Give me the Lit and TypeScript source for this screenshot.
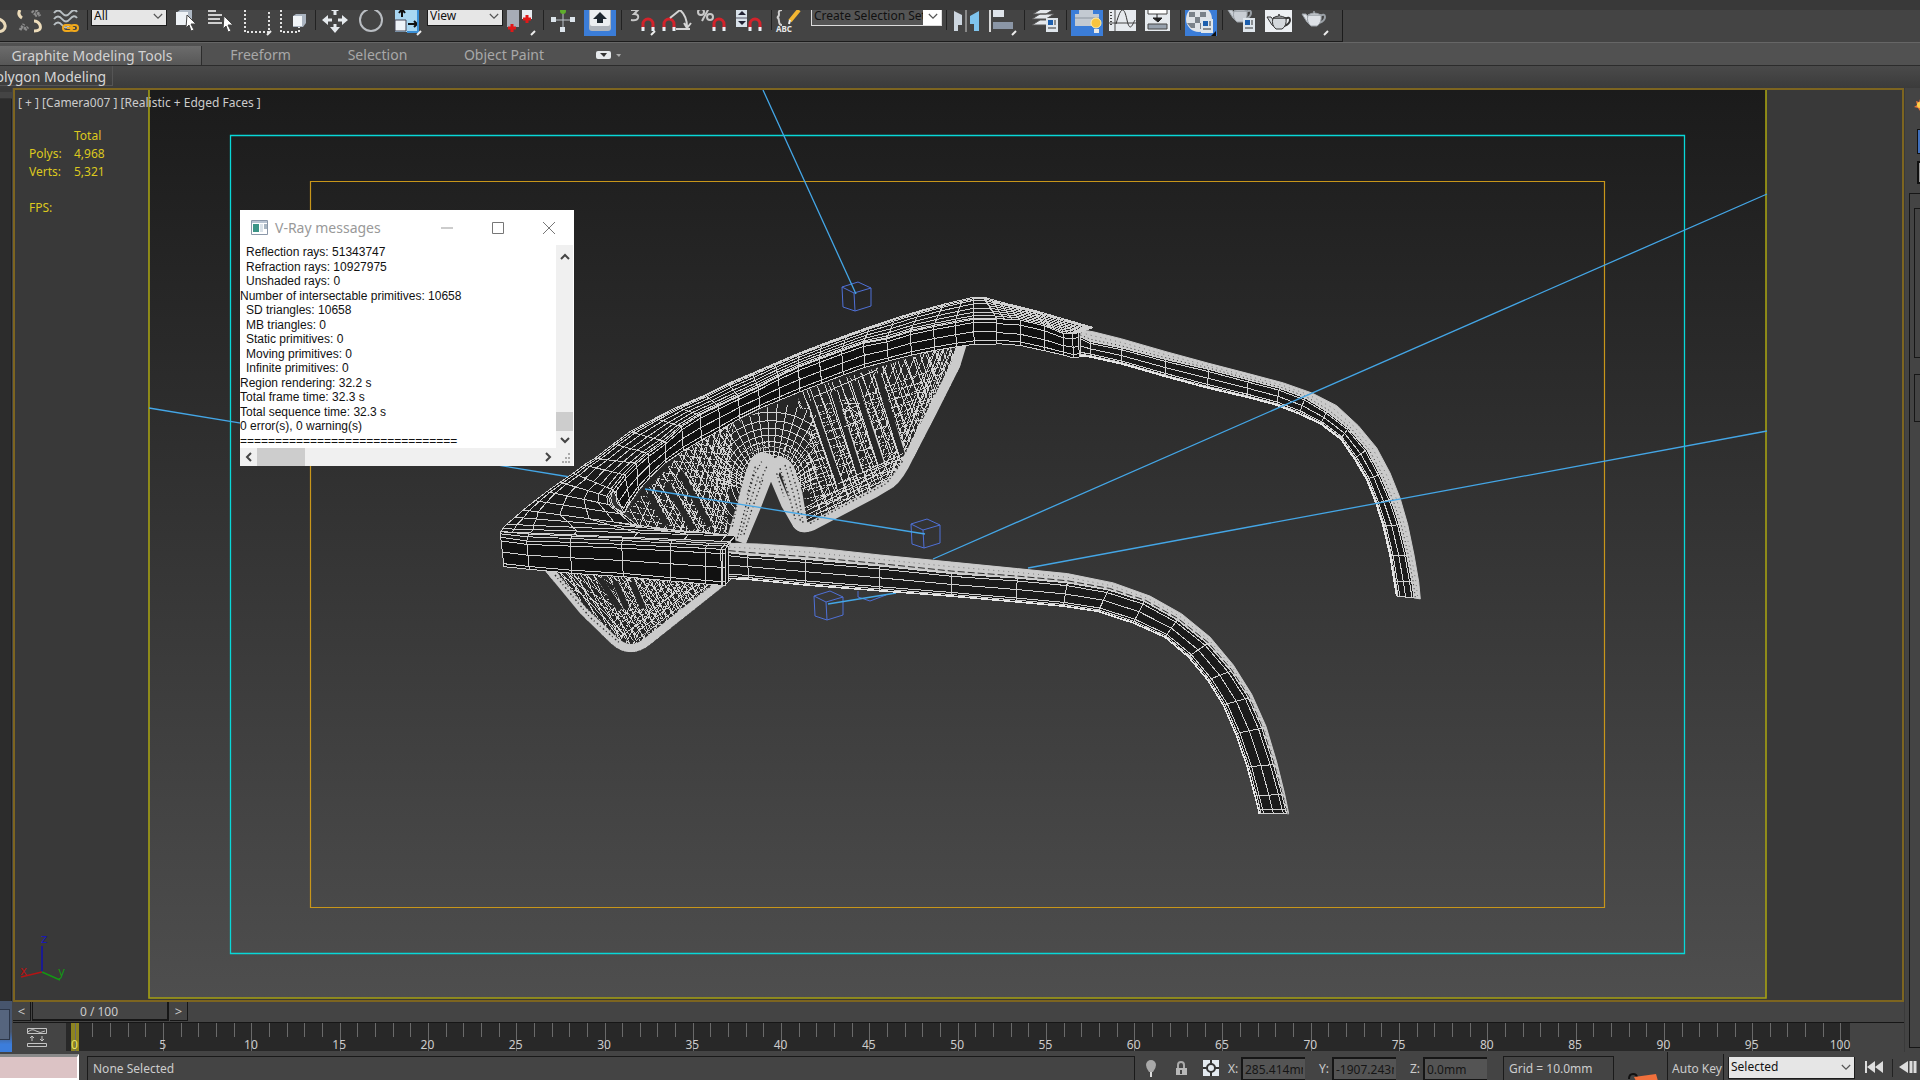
import { LitElement, html, css, svg } from "lit";
import { customElement } from "lit/decorators.js";

type Point = [number, number];

/* ---------- wireframe geometry ---------- */

const parse = (list: string): Point[] => {
  const n = list.trim().split(/\s+/).map(Number);
  const out: Point[] = [];
  for (let i = 0; i < n.length; i += 2) out.push([n[i], n[i + 1]]);
  return out;
};
const front = (list: string): Point[] => parse(list).map(([x, y]) => [480 + x / 3, 280 + y / 3]);
const rear = (list: string): Point[] => parse(list).map(([x, y]) => [940 + x / 3, 280 + y / 2.8]);
const mix = (a: Point, b: Point, t: number): Point => [a[0] + (b[0] - a[0]) * t, a[1] + (b[1] - a[1]) * t];
const toPath = (pts: Point[]) => "M" + pts.map((p) => `${p[0].toFixed(1)} ${p[1].toFixed(1)}`).join("L");

/* A surface stretched between two rails that have the same number of stations. */
const surface = (a: Point[], b: Point[], rows: number[], cls = "dark", subdivide = 1) => {
  const outline = toPath([...a, ...[...b].reverse()]) + "Z";
  let lines = "";
  for (const r of rows) lines += toPath(a.map((p, i) => mix(p, b[i], r)));
  for (let i = 0; i < a.length; i++) {
    lines += toPath([a[i], b[i]]);
    if (i + 1 < a.length) {
      for (let k = 1; k < subdivide; k++) {
        const t = k / subdivide;
        lines += toPath([mix(a[i], a[i + 1], t), mix(b[i], b[i + 1], t)]);
      }
    }
  }
  return svg`<path class="face ${cls}" d=${outline}></path><path class="edge" d=${lines}></path>`;
};

/* The bright, densely subdivided top of a temple. */
const brightBand = (a: Point[], b: Point[], dash: string) => svg`
  <path class="bright" d=${toPath([...a, ...[...b].reverse()]) + "Z"}></path>
  <path class="speck" stroke-dasharray=${dash} d=${toPath(a.map((p, i) => mix(p, b[i], 0.78)))}></path>
  <path class="speck thin" stroke-dasharray="1 4" d=${toPath(a.map((p, i) => mix(p, b[i], 0.4)))}></path>`;

const rimTop = front("400 630 435 585 470 550 505 520 555 485 605 440 660 405 716 378 775 350 835 322 895 290 955 262 1018 238 1085 213 1150 190 1220 177 1290 155 1360 140 1425 128 1480 118 1550 118");
const rimBottom = front("432 700 450 668 475 632 510 592 558 547 610 512 665 480 720 450 780 415 840 385 900 360 960 335 1025 310 1090 285 1155 262 1225 243 1295 225 1365 211 1430 200 1483 193 1550 192");
const rimOuter = front("280 580 312 555 345 535 400 492 450 455 525 415 590 382 675 345 745 310 816 280 885 250 955 220 1025 193 1100 165 1170 140 1245 115 1320 92 1390 73 1445 60 1480 52 1515 52");
const cornerTop = rear("170 108 240 112 313 128 370 150 398 150 415 148");
const cornerBottom = rear("170 178 240 183 313 198 370 210 400 218 418 216");
const cornerOuter = rear("130 48 200 66 280 84 350 103 420 122 460 133");

const blockTop = front("62 772 140 783 270 787 425 793 570 800 675 805 722 808 735 808");
const blockBottom = front("72 860 148 868 275 880 430 890 573 903 678 912 725 916 738 915");
const blockMid = front("62 755 146 762 275 768 428 774 575 782 690 790 735 792 750 785");
const crownLeft = front("62 755 68 746 80 733 105 712 130 690 165 662 200 635 240 607 280 580");
const crownRight = front("750 785 765 768 700 760 600 752 470 735 430 703 392 675 386 650 400 630");

const rearTop = rear("420 158 450 172 545 190 675 222 805 250 925 280 1018 303 1095 330 1160 368 1225 415 1280 475 1320 545 1352 615 1378 685 1400 770 1415 845 1422 890");
const rearBottom = rear("420 212 450 215 545 235 675 270 803 302 920 328 1010 350 1078 375 1142 403 1202 445 1243 500 1280 558 1308 625 1330 690 1350 770 1363 845 1370 885");
const rearOuter = rear("425 140 460 145 545 165 675 200 805 233 925 262 1030 288 1115 316 1190 352 1255 408 1310 470 1350 540 1380 610 1403 685 1422 770 1436 845 1441 893");

const frontTop = [...front("745 818 803 825 975 838 1198 858"), ...rear("35 822 232 835 382 848 505 868 613 900 712 952 802 1018 873 1095 925 1170 965 1255 1000 1357 1025 1440 1036 1482 1040 1494")];
const frontBottom = [...front("745 895 805 898 978 915 1198 932"), ...rear("35 885 228 901 370 913 475 928 580 960 675 1000 745 1055 803 1120 850 1190 887 1270 922 1363 945 1445 955 1482 958 1495")];
const frontOuter = [...front("750 790 835 792 1000 803 1200 825"), ...rear("35 790 232 808 382 822 520 848 630 885 725 935 810 1000 880 1078 935 1160 978 1250 1010 1350 1033 1435 1042 1475 1046 1495")];

/* Parallel lines through a region, drawn in lens units. */
const hatch = (x: number, y: number, dx: number, dy: number, stepX: number, stepY: number, n: number) => {
  let d = "";
  for (let i = 0; i < n; i++) d += `M${x + i * stepX} ${y + i * stepY}l${dx} ${dy}`;
  return d;
};

const fan = (cx: number, cy: number, from: number, to: number, step: number, r0: number, r1: number) => {
  let d = "";
  for (let a = from; a <= to; a += step) {
    const t = (a * Math.PI) / 180;
    const c = Math.cos(t);
    const s = Math.sin(t);
    d += `M${(cx + c * r0).toFixed(0)} ${(cy - s * r0).toFixed(0)}L${(cx + c * r1).toFixed(0)} ${(cy - s * r1).toFixed(0)}`;
  }
  return d;
};

const lenses = svg`
  <g transform="translate(480 280) scale(.33333)">
    <clipPath id="upper"><path d="M440 695L510 592 610 512 720 450 840 385 960 335 1090 285 1225 243 1365 211 1460 195 1440 260 1370 400 1300 535Q1270 600 1240 622L1190 652 1015 744Q965 772 940 740L905 680 873 605 840 690 797 792 735 770 600 755 470 735Z"></path></clipPath>
    <clipPath id="right"><path d="M960 335L1460 180 1440 260 1300 535 1240 622 965 760 975 640 930 500Z"></path></clipPath>
    <clipPath id="left"><path d="M440 695L610 512 780 415 800 520 770 620 735 770 470 735Z"></path></clipPath>
    <clipPath id="bridge"><path d="M720 450L960 335 1010 380 1010 620 975 640 873 600 797 790 735 770 700 600Z"></path></clipPath>
    <clipPath id="lower"><path d="M195 872L300 1000 395 1092Q450 1140 508 1095L735 915Z"></path></clipPath>
    <g clip-path="url(#upper)">
      <rect class="lens" x="430" y="190" width="1040" height="600"></rect>
      <g clip-path="url(#left)">
        <path class="wire" d=${hatch(380, 560, 120, 220, 22, -8, 20)}></path>
        <path class="wire" d=${hatch(430, 520, 190, 250, 30, -6, 12)}></path>
        <path class="wire soft" d=${hatch(470, 760, 130, -330, 26, 0, 16)}></path>
        <path class="wire soft" d=${hatch(600, 760, 60, -330, 17, 0, 12)}></path>
        <path class="wire dots" d=${hatch(440, 640, 330, 60, 0, 18, 9) + hatch(490, 610, 300, 40, 14, -18, 8)}></path>
        <path class="slot" d="M505 640L560 735M560 610L640 750M600 575L690 740"></path>
        <path class="wire" d="M520 640L575 735M575 610L655 750M615 575L705 740"></path>
      </g>
      <g clip-path="url(#right)">
        <path class="wire" d=${hatch(880, 290, 150, 430, 23, -4, 28)}></path>
        <path class="wire soft" d=${hatch(892, 290, 170, 430, 34, -6, 20)}></path>
        <path class="wire soft" d=${hatch(1010, 700, 200, -480, 28, -8, 17)}></path>
        <path class="wire dots" d=${hatch(960, 420, 500, -190, 3, 22, 18)}></path>
        <path class="wire dots" d=${hatch(960, 390, 500, -110, 0, 27, 12)}></path>
        <path class="wire" d=${hatch(960, 690, 320, -165, 2, 12, 7)}></path>
        <path class="wire" d=${hatch(1370, 200, -150, 390, 12, 0, 7)}></path>
        <path class="slot" d="M992 362L1078 612M1060 335L1140 585M1122 305L1204 552M1192 280L1268 530"></path>
        <path class="wire" d="M982 365L1068 612M1004 362L1088 606M1050 335L1130 585M1072 330L1150 580M1112 305L1194 555M1134 300L1215 548M1180 282L1258 530M1204 278L1280 515"></path>
        <path class="wire" d="M1000 352L1190 270M1075 612L1270 520M1100 380q30 -25 40 10t-10 40t-30 -10t0 -40M1090 400q30 -25 50 10M1096 370h44M1092 440l50 -20"></path>
      </g>
      <g clip-path="url(#bridge)">
        <path class="lens" d="M760 440Q870 370 990 390L975 640 740 770Z"></path>
        ${[66, 78, 90, 104, 120, 140, 162, 186, 212].map(
          (r) => svg`<ellipse class="wire" cx="872" cy="600" rx=${r} ry=${r * 0.96}></ellipse>`
        )}
        <path class="wire" d=${fan(872, 660, 20, 160, 6, 100, 290)}></path>
        <path class="wire dots" d=${fan(872, 640, 13, 170, 6, 80, 160)}></path>
      </g>
      <path class="glow wide" d="M765 800L795 700 818 610 836 560Q850 530 873 575"></path>
      <path class="glow leg" d="M873 580Q895 530 922 570L945 640 965 760"></path>
      <path class="glow rim" d="M1460 195L1440 260 1370 400 1300 535Q1270 600 1240 622L1190 652 1015 744Q965 772 940 740L905 680 873 605 840 690 797 792"></path>
      <path class="dash" d="M772 775L797 680 820 590 845 545M757 740L778 640 800 560M848 600L815 690 790 770M835 590L806 680 782 765M826 560L800 650M860 560L838 610"></path>
      <path class="dash" d="M900 565L925 640 948 725M915 555L940 640 962 725M930 560L955 640 970 735M890 580L912 650M975 640L985 735M1000 700L1200 600M800 530Q870 475 950 545M815 515Q870 480 930 520"></path>
      <path class="dash" d="M1415 205L1385 300 1310 440 1275 520M1400 210L1370 300 1290 450M990 730L1220 610 1270 540"></path>
    </g>
    <g clip-path="url(#lower)">
      <rect class="lens" x="190" y="860" width="560" height="270"></rect>
      <path class="wire" d=${hatch(150, 860, 190, 270, 20, 1, 26)}></path>
      <path class="wire soft" d=${hatch(260, 860, 110, 270, 24, 1, 16)}></path>
      <path class="wire soft" d=${hatch(330, 1130, 130, -260, 22, 0, 16)}></path>
      <path class="wire dots" d=${hatch(230, 900, 300, 170, 22, -8, 14)}></path>
      <path class="wire dots" d=${hatch(420, 1070, 300, -200, -8, -14, 9)}></path>
      <path class="slot" d="M360 895L420 990M455 905L490 985M405 905L440 985"></path>
      <path class="wire" d="M470 1080L690 910M460 1065L650 915M450 1050L610 915M245 880L430 1075M265 880L440 1070"></path>
      <path class="glow rim low" d="M195 872L300 1000 395 1092Q450 1140 508 1095L735 915"></path>
      <path class="dash" d="M240 890L330 995 410 1065 450 1085 500 1060 690 920M225 885L330 1012 420 1090"></path>
    </g>
  </g>`;

const helper = (x: number, y: number) => svg`
  <path class="helper" d="M${x} ${y + 6}l16 -5l13 6l-17 5zM${x} ${y + 6}l1 20l12 4l16 -5v-18M${x + 12} ${y + 12}l1 18"></path>`;

const scene = svg`
  <g>
    ${brightBand(rearOuter, rearTop, "1 3")}
    ${surface(rearTop, rearBottom, [0, 0.12, 0.48, 0.82, 0.92, 1])}
    <path class="edge hard" d=${toPath(rearBottom)}></path>
    ${helper(842, 281)} ${helper(911, 518)} ${helper(814, 590)}
    <path class="helper" d="M858 591v6l12 4l16 -6"></path>
    <path class="ray" d="M763 90L856 294M1767 194L933 559M1767 431L1028 568M896 593L828 604"></path>
    ${lenses}
    <path class="ray" d="M149 408L570 477M645 489L925 534"></path>
    ${surface(rimOuter, rimTop, [0, 0.06, 0.14, 0.3, 0.5, 0.68, 0.84, 0.94, 1])}
    ${surface(cornerOuter, cornerTop, [0, 0.08, 0.16, 0.28, 0.4, 0.52, 0.64, 0.76, 0.88, 1], "dark", 3)}
    ${surface([rimOuter[20], cornerOuter[0]], [rimTop[20], cornerTop[0]], [0, 0.1, 0.2, 0.3, 0.45, 0.6, 0.75, 0.9, 1])}
    ${surface(rimTop, rimBottom, [0, 0.13, 0.5, 0.86, 1], "deep")}
    ${surface(cornerTop, cornerBottom, [0, 0.2, 0.56, 0.86, 1], "deep")}
    ${surface(crownLeft, crownRight, [0, 0.05, 0.13, 0.32, 0.58, 0.8, 0.96, 1])}
    ${surface(blockMid, blockTop, [0, 0.4, 1])}
    ${surface(blockTop, blockBottom, [0, 0.12, 0.5, 0.9, 1], "deep")}
    <path class="face deep" d="M725 549L735 536 736 552 730 560V580L725 585Z"></path>
    <path class="edge" d="M725 549L735 536M725 549V585L730 580V560L736 550M722 549V585M728 546V582"></path>
    <path class="edge" d="M613 490Q608 500 615 508L624 513 630 500M618 487Q614 498 618 504L624 508"></path>
    ${brightBand(frontOuter, frontTop, "7 3")}
    ${surface(frontTop, frontBottom, [0, 0.12, 0.48, 0.84, 0.93, 1])}
    <path class="edge hard" d=${toPath(frontBottom)}></path>
  </g>`;

/* ---------- toolbar icons, 36 x 31 ---------- */

const magnet = (x: number, y: number) => svg`
  <path d="M${x} ${y + 10}v-5a5 5 0 0 1 10 0v5" fill="none" stroke="#d3232b" stroke-width="3"></path>
  <path d="M${x} ${y + 8}v4M${x + 10} ${y + 8}v4" stroke="#e8f0f6" stroke-width="3"></path>`;
const more = svg`<path d="M31 21l-4 4" stroke="#eee" stroke-width="2"></path>`;
const sheet = (x: number, y: number) => svg`
  <rect x=${x} y=${y} width="12" height="14" fill="#dfe6ec"></rect>
  <path d="M${x + 2} ${y + 2}h5v5h-5z" fill="#1c5fae"></path>
  <path d="M${x + 9} ${y + 2}v5M${x + 2} ${y + 10}h8" stroke="#333"></path>`;
const pot = (x: number, y: number, fill: string, line: string) => svg`
  <g transform="translate(${x} ${y})">
    <path d="M18 5q5 -3 5 1q0 4 -6 6" fill="none" stroke=${line} stroke-width="2"></path>
    <path d="M0 3l4 0l3 4l1 6l-3 -2z" fill=${fill} stroke=${line}></path>
    <path d="M6 4h13q1 8 -4 11H9Q4 11 6 4z" fill=${fill} stroke=${line}></path>
    <path d="M6 4q6 -4 13 0z" fill=${fill} stroke=${line}></path><circle cx="12" cy="1" r="1" fill=${line}></circle>
  </g>`;

const icons: Record<string, unknown> = {
  link: svg`<path d="M20 21c6 2 10-2 9-6s-3-5-6-6" fill="none" stroke="#e9d9b8" stroke-width="3"></path>`,
  unlink: svg`<path d="M8 0q-3 5 2 8M22 21q8 0 6-6q-2 -4 -6 -4" fill="none" stroke="#eddcba" stroke-width="3"></path>
    <path d="M20 1l3 3M24 0l4 6M9 17l6 2M8 20l4-6M13 20l3-3M23 6l4 -3" stroke="#8d8d8d" stroke-width="3" stroke-dasharray="2 1"></path>`,
  wave: svg`<path d="M6 3q4-5 8 0t8 0t7 -1M6 9q4-5 8 0t8 0t7 -1M6 15q4-5 8 0t8 0" fill="none" stroke="#b9c0c4" stroke-width="2"></path>
    <path d="M18 15h3a3 3 0 0 1 0 6h-3a3 3 0 0 1 0-6zM26 15h1a3 3 0 0 1 0 6h-1a3 3 0 0 1 0-6M19 18h8" fill="none" stroke="#f0a81c" stroke-width="2"></path>`,
  pick: svg`<path d="M8 3l4-3h12v11l-4 4H8z" fill="#aeb8c4"></path><path d="M8 2h12v13H8z" fill="#eef2f6"></path>
    <path d="M19 5l9 9h-5l3 6l-3 1l-2-6l-3 3z" fill="#fff" stroke="#444"></path>`,
  byname: svg`<path d="M4 1h8M4 5h14M4 9h12M4 13h14" stroke="#cfcfcf" stroke-width="2"></path>
    <path d="M20 6l9 9h-5l3 6l-3 1l-2-6l-3 3z" fill="#fff" stroke="#444"></path>`,
  region: svg`<path d="M5 0v22h24V0" fill="none" stroke="#e4e4e4" stroke-width="2" stroke-dasharray="2 2"></path>${more}`,
  window: svg`<path d="M5 0v22h18V16" fill="none" stroke="#e4e4e4" stroke-width="2" stroke-dasharray="2 2"></path>
    <path d="M17 6l3-2h10v9l-3 4H17z" fill="#aab4c0"></path><path d="M17 6h9v10h-9z" fill="#f2f5f8"></path>`,
  move: svg`<path d="M17 0v5M17 14v5M9 10h5M20 10h5" stroke="#e6eaee" stroke-width="3"></path>
    <path d="M12 17h10l-5 6zM10 5v10l-6-5zM24 5v10l6-5zM13 1h8l-4-4z" fill="#e6eaee"></path>`,
  rotate: svg`<circle cx="17" cy="10" r="11" fill="none" stroke="#b9bdc2" stroke-width="2"></circle><path d="M14 0h6" stroke="#444" stroke-width="3"></path>`,
  scale: svg`<path d="M5 0h24v22H5z" fill="#a9d7f2"></path><path d="M5 10h11v11H5z" fill="#eef3f8" stroke="#445" ></path>
    <path d="M12 0v7M9 3l3-4l3 4M18 14h8M24 11l3 3l-3 3" fill="none" stroke="#111" stroke-width="2"></path><path d="M28 0v22H17" fill="none" stroke="#3a8fd6" stroke-width="2"></path>${more}`,
  pivot: svg`<path d="M3 0h12v17H3z" fill="#a7acb6"></path><path d="M18 0h10v9h-10z" fill="#e9edf2"></path>
    <path d="M8 14v8M4 18h8M23 5v8M19 9h8" stroke="#e01818" stroke-width="3"></path>${more}`,
  manip: svg`<path d="M17 2v18M5 10h24" stroke="#b9c1c8" stroke-width="1"></path>
    <path d="M14 17h5v5h-5zM5 7h5v5H5zM24 7h5v5h-5z" fill="#dde5ec"></path><circle cx="17" cy="1" r="3" fill="#5fae2c"></circle>`,
  keys: svg`<path d="M7 0h22v18q0 3-3 3H10q-3 0-3-3z" fill="#aeb4bc"></path><path d="M8 0h20v14q0 2-2 2H10q-2 0-2-2z" fill="#eceff2"></path>
    <path d="M18 2l7 7h-4v4h-6V9h-4z" fill="#1d2730"></path>`,
  snap: svg`<path d="M7 0h7l-4 4q5 0 4 4q-1 3 -7 2" fill="none" stroke="#c8c8c8" stroke-width="2"></path>${magnet(19, 9)}${more}`,
  angle: svg`${magnet(4, 9)}<path d="M10 8L20 0M16 19h14M20 0q7 6 7 17M24 13l3 5l4-5" fill="none" stroke="#d4d4d4" stroke-width="2"></path>`,
  percent: svg`<circle cx="5" cy="2" r="3" fill="none" stroke="#c8c8c8" stroke-width="2"></circle><circle cx="14" cy="7" r="3" fill="none" stroke="#c8c8c8" stroke-width="2"></circle><path d="M13 -2L6 11" stroke="#c8c8c8" stroke-width="2"></path>${magnet(18, 9)}`,
  spin: svg`<path d="M4 0h11v17H4z" fill="#d9e2ea"></path><path d="M6 5l4-4l4 4zM6 11h8l-4 4z" fill="#223"></path><path d="M4 8h11" stroke="#556"></path>${magnet(18, 9)}`,
  sets: svg`<path d="M8 0q-4 0-3 4q0 3-2 3q2 1 2 4q0 4 3 4" fill="none" stroke="#cfcfcf" stroke-width="2"></path>
    <path d="M25 0l-9 11" stroke="#f2b632" stroke-width="4"></path><path d="M16 10l-1 4" stroke="#eee" stroke-width="2"></path>
    <text x="2" y="22" font-size="8" font-weight="bold" fill="#e8e8e8">ABC</text>`,
  mirror: svg`<path d="M5 1l8 4v10H9v6H5z" fill="#cdd6df"></path><path d="M17 0v22" stroke="#cfcfcf"></path><path d="M30 1l-9 5v8h4v7h5z" fill="#7fc4ee"></path>`,
  align: svg`<path d="M5 0v22" stroke="#d8d8d8" stroke-width="2"></path><path d="M8 0h11v7H8z" fill="#dfe4ea"></path><path d="M8 12h20v7H8z" fill="#8b96a6"></path>${more}`,
  layers: svg`<path d="M5 15l8-5h14l-8 5zM5 9l8-5h14l-8 5zM6 4l8-5h13l-8 5z" fill="#e4e8ec" stroke="#555"></path>${sheet(19, 8)}`,
  ribbon: svg`<path d="M10 0h14v4h6v12H6V4h4z" fill="#c3cad2"></path><path d="M6 8h24" stroke="#8b949e"></path><circle cx="27" cy="13" r="5" fill="#f8c440" stroke="#fff0b0"></circle><path d="M25 19h5v4h-5z" fill="#e9e9e9"></path>`,
  curve: svg`<path d="M4 0h27v21H4z" fill="#e6eaee"></path><path d="M10 0v21M4 13h27" stroke="#444"></path><path d="M6 2v15" stroke="#444" stroke-width="2" stroke-dasharray="1 2"></path><path d="M11 14c5-18 8-18 11-4s6 3 8 0" fill="none" stroke="#333"></path>`,
  schema: svg`<path d="M4 0h25v21H4z" fill="#e6eaee"></path><path d="M7 -1h19v5H7z" fill="#fff" stroke="#444"></path><path d="M7 14h19v5H7z" fill="#97a1ad" stroke="#444"></path><path d="M16 4v5M12 8h9l-4 4z" fill="#222" stroke="#222"></path>`,
  material: svg`<circle cx="16" cy="9" r="13" fill="#dfe3e8"></circle><path d="M6 2h6v5H6zM17 2h6v5h-6zM12 7h5v6h-5zM4 13h8v5H8zM17 13h6v6h-6z" fill="#7b828a"></path>${sheet(18, 9)}<path d="M33 21l-5 5h5z" fill="#111"></path>`,
  setup: svg`${pot(3, -3, "#c9ced4", "#9aa0a6")}${sheet(18, 8)}`,
  frame: svg`<path d="M4 0h27v22H4z" fill="#edf0f3"></path>${pot(6, 4, "#d4d8dc", "#333")}`,
  render: svg`${pot(5, 1, "#dde1e6", "#9aa0a6")}${more}`,
};

const chevron = html`<svg class="chevron" viewBox="0 0 12 8" aria-hidden="true"><path d="M1 1l5 5l5-5" fill="none" stroke="#555" stroke-width="1.4"></path></svg>`;

const tool = (name: string, label: string, extra = "") => html`
  <button class="tool ${extra}" aria-label=${label}><svg viewBox="0 0 36 31" aria-hidden="true">${icons[name]}</svg></button>`;
const bar = html`<span class="sep"></span>`;

const messages: [string, boolean][] = [
  ["Reflection rays: 51343747", true],
  ["Refraction rays: 10927975", true],
  ["Unshaded rays: 0", true],
  ["Number of intersectable primitives: 10658", false],
  ["SD triangles: 10658", true],
  ["MB triangles: 0", true],
  ["Static primitives: 0", true],
  ["Moving primitives: 0", true],
  ["Infinite primitives: 0", true],
  ["Region rendering: 32.2 s", false],
  ["Total frame time: 32.3 s", false],
  ["Total sequence time: 32.3 s", false],
  ["0 error(s), 0 warning(s)", false],
  ["===============================", false],
];

const arrow = (d: string) => html`<svg viewBox="0 0 10 10" width="10" height="10" aria-hidden="true"><path d=${d} fill="none" stroke="#444" stroke-width="2"></path></svg>`;

@customElement("vray-messages")
export class VrayMessages extends LitElement {
  static styles = css`
    :host { display: flex; flex-direction: column; background: #fff; box-sizing: border-box; color: #111; }
    header { display: flex; align-items: center; height: 35px; padding-left: 11px; color: #999; font: 14px "Noto Sans", sans-serif; }
    h2 { flex: 1; margin: 0 0 0 7px; font: inherit; line-height: 20px; }
    button { border: 0; padding: 0; background: none; display: grid; place-items: center; }
    header button { width: 51px; height: 34px; }
    .body { flex: 1; display: grid; grid-template-columns: 1fr 17px; grid-template-rows: 1fr 18px; min-height: 0; padding-right: 1px; }
    .log { display: flex; flex-direction: column; font: 12px "Liberation Sans", sans-serif; overflow: hidden; }
    .log div { flex: 1; display: flex; align-items: center; white-space: nowrap; line-height: 14px; min-height: 0; }
    .log .in { padding-left: 6px; }
    .v, .h { background: #f0f0f0; display: flex; justify-content: space-between; }
    .v { flex-direction: column; }
    .v button, .h button { width: 17px; height: 17px; }
    .v button:first-child { margin-top: 3px; }
    .v .gap { flex: 1; }
    .v .thumb { height: 19px; background: #cdcdcd; }
    .h .thumb { width: 48px; background: #cdcdcd; }
    .h .gap { flex: 1; }
    .grip { background: #f0f0f0; }
  `;
  render() {
    return html`
      <header>
        <svg width="17" height="15" viewBox="0 0 17 15" aria-hidden="true"><path d="M.5.5h16v14H.5z" fill="#fff" stroke="#8a97a8"></path><path d="M1 1h15v2H1z" fill="#b9c4d2"></path><path d="M2 4h6v8H2z" fill="#3b9486"></path><path d="M9 4h3v8H9z" fill="#dbe3ea"></path><path d="M13 4h3v5h-3z" fill="#a9b6c2"></path></svg>
        <h2>V-Ray messages</h2>
        <button aria-label="Minimize"><svg width="12" height="12"><path d="M0 6h12" stroke="#999"></path></svg></button>
        <button aria-label="Maximize"><svg width="12" height="12"><path d="M.5.5h11v11H.5z" fill="none" stroke="#777"></path></svg></button>
        <button aria-label="Close"><svg width="12" height="12"><path d="M0 0l12 12M12 0L0 12" stroke="#777"></path></svg></button>
      </header>
      <div class="body">
        <div class="log" role="log">${messages.map(([t, i]) => html`<div class=${i ? "in" : ""}>${t}</div>`)}</div>
        <div class="v">
          <button aria-label="Scroll up">${arrow("M1 7l4-4l4 4")}</button><span class="gap"></span><span class="thumb"></span>
          <button aria-label="Scroll down">${arrow("M1 3l4 4l4-4")}</button>
        </div>
        <div class="h">
          <button aria-label="Scroll left">${arrow("M7 1l-4 4l4 4")}</button><span class="thumb"></span><span class="gap"></span>
          <button aria-label="Scroll right">${arrow("M3 1l4 4l-4 4")}</button>
        </div>
        <svg class="grip" width="17" height="18" aria-hidden="true"><path d="M12 6h2M9 10h2M12 10h2M6 14h2M9 14h2M12 14h2" stroke="#aaa" stroke-width="2"></path></svg>
      </div>`;
  }
}

@customElement("scene-viewport")
export class SceneViewport extends LitElement {
  static styles = css`
    :host { display: block; position: relative; border: 2px solid #7d6520; background: #393939; overflow: hidden; font: 12px "Noto Sans", sans-serif; }
    .canvas { position: absolute; inset: 0; width: 100%; height: 100%; display: block; }
    .label { position: absolute; left: 3px; top: 4px; color: #ccc; line-height: 18px; white-space: pre; }
    .stats { position: absolute; left: 14px; top: 37px; border-collapse: collapse; color: #dcc81e; line-height: 18px; }
    .stats th, .stats td { font-weight: normal; text-align: left; padding: 0; height: 18px; }
    .stats th:first-child { width: 45px; }
    vray-messages { position: absolute; left: 225px; top: 120px; width: 334px; height: 256px; }
    .face { stroke: none; }
    .dark { fill: #1b1b1b; }
    .deep { fill: #111; }
    .edge { fill: none; stroke: #d0d0d0; stroke-width: 1; shape-rendering: crispEdges; }
    .hard { stroke: #e6e6e6; stroke-width: 1.6; }
    .bright { fill: #cbcbcb; stroke: #cbcbcb; }
    .speck { fill: none; stroke: #2a2a2a; stroke-width: 1; }
    .thin { stroke-width: 0.5; }
    .lens { fill: #272727; }
    .wire { fill: none; stroke: #d2d2d2; stroke-width: 3; shape-rendering: crispEdges; }
    .soft { stroke-dasharray: 12 2; }
    .dots { stroke-dasharray: 7 3; }
    .slot { fill: none; stroke: #272727; stroke-width: 18; }
    .glow { fill: none; stroke: #cbcbcb; }
    .glow.wide { stroke-width: 62; }
    .glow.leg { stroke-width: 44; }
    .glow.rim { stroke-width: 58; }
    .glow.low { stroke-width: 50; }
    .dash { fill: none; stroke: #2c2c2c; stroke-width: 4; stroke-dasharray: 5 7 3 9; }
    .helper { fill: none; stroke: #4f70d6; stroke-width: 1; }
    .ray { fill: none; stroke: #44a6e6; stroke-width: 1.3; }
    text { font: 12px "DejaVu Sans", sans-serif; }
  `;
  render() {
    return html`
      <svg class="canvas" viewBox="15 90 1887 910" preserveAspectRatio="xMinYMin slice" role="img" aria-label="Wireframe of a pair of glasses">
        <defs><linearGradient id="sky" x1="0" y1="0" x2="0" y2="1"><stop offset="0" stop-color="#1b1b1b"></stop><stop offset="1" stop-color="#4e4e4e"></stop></linearGradient></defs>
        <rect x="149" y="90" width="1617" height="908" fill="url(#sky)"></rect>
        <path d="M149 90V998H1766V90" fill="none" stroke="#a5a012" stroke-width="1.6"></path>
        <path d="M230.5 135.5H1684.5V953.5H230.5Z" fill="none" stroke="#08d8d8" stroke-width="1.3"></path>
        <path d="M310.5 181.5H1604.5V907.5H310.5Z" fill="none" stroke="#c8961a" stroke-width="1.2"></path>
        ${scene}
        <path d="M42 972V946" stroke="#1414a8" stroke-width="1.6"></path>
        <path d="M42 972L21 977" stroke="#b41414" stroke-width="1.4"></path>
        <path d="M42 972L60 980" stroke="#149614" stroke-width="1.4"></path>
        <text x="41" y="943" fill="#1818b8">z</text>
        <text x="20" y="975" fill="#b41414">x</text>
        <text x="58" y="976" fill="#149614">y</text>
      </svg>
      <div class="label">[ + ] [Camera007 ] [Realistic + Edged Faces ]</div>
      <table class="stats">
        <tr><th></th><th>Total</th></tr>
        <tr><th>Polys:</th><td>4,968</td></tr>
        <tr><th>Verts:</th><td>5,321</td></tr>
        <tr><th></th><td></td></tr>
        <tr><th>FPS:</th><td></td></tr>
      </table>
      <vray-messages></vray-messages>`;
  }
}

@customElement("app-root")
export class AppRoot extends LitElement {
  static styles = css`
    :host { display: flex; flex-direction: column; height: 100vh; overflow: hidden; background: #444; color: #ccc; font: 12px "Noto Sans", sans-serif; }
    * { box-sizing: border-box; }
    button { font: inherit; color: inherit; border: 0; padding: 0; background: none; }
    select, input { font: inherit; border-radius: 0; margin: 0; }
    .title { flex: none; height: 10px; background: #393939; }
    .tools { flex: none; display: flex; height: 32px; background: #444; align-self: flex-start; padding-right: 9px; border-right: 1px solid #1c1c1c; border-bottom: 1px solid #1c1c1c; overflow: hidden; }
    .tool { width: 36px; height: 31px; flex: none; }
    .tool.cut { margin-left: -24px; }
    .tool svg { display: block; width: 36px; height: 31px; overflow: hidden; font-family: "Noto Sans", sans-serif; }
    .tool.on { background: linear-gradient(#3b7dd8, #3b7dd8) 2px 0 / 32px 26px no-repeat; }
    .sep { width: 6px; height: 20px; flex: none; background: linear-gradient(#222, #222) 3px 0 / 1px 100% no-repeat; }
    .combo { position: relative; display: flex; align-items: flex-end; flex: none; width: 76px; height: 16px; margin: 0 1px; overflow: hidden; border: 1px solid #1c1c1c; border-top: 0; }
    .combo select { appearance: none; flex: none; width: 100%; height: 15px; border: 0; background: #e6e6e6; color: #111; padding: 0 2px 4px; line-height: 11px; }
    .combo .chevron { position: absolute; right: 3px; bottom: 5px; width: 10px; height: 7px; }
    .combo.sets { width: 131px; border-color: #ddd; }
    .combo.sets select { background: linear-gradient(90deg, #555 111px, #fff 111px); padding-right: 18px; }
    .tabs { flex: none; display: flex; height: 24px; background: #515151; border-top: 1px solid #666; border-bottom: 1px solid #2c2c2c; font-size: 14px; }
    .tabs button { width: 117px; color: #a8a8a8; line-height: 22px; padding-top: 1px; }
    .tabs .active { width: 202px; margin-top: 3px; line-height: 18px; padding: 0 17px 0 0; color: #d2d2d2; background: linear-gradient(#6c6c6c, #575757); border-right: 1px solid #2c2c2c; }
    .tabs .wide { width: 136px; }
    .tabs .min { display: flex; align-items: center; justify-content: center; width: 73px; }
    .panelrow { flex: none; display: flex; height: 22px; background: linear-gradient(#4a4a4a, #3b3b3b); font-size: 14px; }
    .panelrow button { flex: none; margin-left: -13px; padding: 1px 6px 0 0; line-height: 20px; color: #d6d6d6; border-right: 1px solid #555; border-bottom: 1px solid #555; height: 20px; }
    .work { flex: 1; display: flex; min-height: 0; }
    .left { width: 13px; flex: none; display: flex; flex-direction: column; background: #2c2c2c; border-right: 1px solid #444; }
    .left .cap { height: 11px; background: #444; border-bottom: 1px solid #333; border-top: 4px solid #3a3a3a; }
    .left .fill { flex: 1; border-right: 1px solid #1e1e1e; }
    .left .dock { height: 51px; background: linear-gradient(#47556d 60%, #3c7ddb 85%); padding: 8px 2px 12px 0; }
    .left .dock div { height: 100%; background: #56657e; border: 1px solid #2c3648; border-left: 0; }
    .mid { flex: 1; min-width: 0; display: flex; flex-direction: column; padding-bottom: 1px; }
    scene-viewport { flex: 1; min-height: 0; }
    .slider { flex: none; display: flex; height: 21px; align-items: flex-start; border-bottom: 1px solid #161616; }
    .slider button { height: 19px; width: 18px; border-right: 1px solid #161616; border-bottom: 1px solid #161616; line-height: 18px; font-size: 13px; }
    .slider .thumb { width: 137px; margin: 0 1px; padding: 1px 2px 0 0; border-width: 0 2px 2px 1px; border-style: solid; border-color: #161616; font-size: 12px; }
    .timeline { flex: none; display: flex; height: 28px; padding-right: 54px; }
    .timeline .open { width: 53px; display: grid; place-items: center; padding-right: 6px; }
    .track { flex: 1; display: flex; background: #282828; }
    .frame { flex: 1 1 0; min-width: 0; position: relative; display: flex; justify-content: center; align-items: flex-end; }
    .frame::before { content: ""; position: absolute; left: 50%; top: 0; width: 1px; height: 14px; background: #6a6a6a; }
    .frame.major::before { height: 28px; }
    .frame.now { background: linear-gradient(#8c8420, #8c8420) center / 8px 100% no-repeat; }
    .frame span { position: relative; line-height: 12px; white-space: nowrap; padding-right: 1px; }
    .frame.now span { color: #e8e060; }
    .right { width: 16px; flex: none; padding: 11px 0 0 4px; overflow: hidden; border-left: 1px solid #3a3a3a; }
    .right .sun { display: block; margin-left: 5px; width: 12px; height: 12px; }
    .right .chip { margin: 18px 0 0 8px; height: 25px; border: 1px solid #111; background: #3f6fbd; width: 20px; }
    .right .chip.dark { margin-top: 7px; background: #999; border-width: 2px; height: 23px; }
    .right .roll { margin-top: 9px; height: calc(100% - 98px); border: 1px solid #161616; padding: 14px 0 0 4px; width: 30px; }
    .right .group { height: 150px; border: 1px solid #161616; margin-bottom: 16px; }
    .right .group.small { height: 48px; }
    .status { flex: none; display: flex; height: 28px; align-items: stretch; }
    .script { width: 79px; flex: none; border: 0; border-top: 3px solid #8a8a8a; border-right: 2px solid #fff; border-bottom: 2px solid #fff; background: #dcc3c5; margin-top: 2px; }
    .prompt { flex: 1; margin: 4px 0 0 8px; padding-left: 5px; border: 1px solid #1a1a1a; border-bottom: 0; line-height: 23px; }
    .marks { display: flex; width: 93px; align-items: center; justify-content: space-between; padding: 4px 8px 0 7px; }
    .marks button { height: 18px; width: 18px; display: grid; place-items: center; }
    .coord { display: flex; width: 91px; align-items: flex-end; }
    .coord label { width: 13px; line-height: 23px; }
    .coord input { width: 64px; height: 23px; border: 1px solid #161616; border-width: 2px 0 1px 2px; background: #545454; color: #161616; padding: 0 2px; }
    .grid { width: 111px; margin: 4px 0 0 2px; border: 1px solid #1a1a1a; border-bottom: 0; padding-left: 5px; line-height: 23px; white-space: nowrap; }
    .tag { width: 54px; overflow: hidden; padding: 4px 0 0 4px; border-right: 1px solid #1a1a1a; }
    .tag svg { display: block; margin: 17px 0 0 10px; }
    .auto { width: 56px; text-align: center; padding: 2px 0 0 3px; border-right: 1px solid #1a1a1a; margin: 2px 4px 0 0; white-space: nowrap; }
    .combo.key { align-self: flex-end; width: 127px; height: 22px; margin: 0 0 1px; }
    .combo.key select { padding: 0 2px; height: 22px; line-height: 22px; }
    .combo.key .chevron { bottom: 7px; }
    .play { display: flex; width: 65px; padding: 4px 4px 0 10px; gap: 4px; align-items: center; }
    .play .sep { height: 18px; }
  `;

  render() {
    const frames = Array.from({ length: 101 }, (_, i) => i);
    return html`
      <div class="title"></div>
      <nav class="tools" aria-label="Main toolbar">
        ${tool("link", "Link", "cut")}${tool("unlink", "Unlink")}${tool("wave", "Bind to space warp")}${bar}
        <span class="combo"><select aria-label="Selection filter"><option>All</option></select>${chevron}</span>
        ${tool("pick", "Select object")}${tool("byname", "Select by name")}${tool("region", "Selection region")}${tool("window", "Window crossing")}${bar}
        ${tool("move", "Move")}${tool("rotate", "Rotate")}${tool("scale", "Scale")}
        <span class="combo"><select aria-label="Reference coordinates"><option>View</option></select>${chevron}</span>
        ${tool("pivot", "Pivot center")}${bar}${tool("manip", "Manipulate")}${tool("keys", "Keyboard override", "on")}${bar}
        ${tool("snap", "Snaps")}${tool("angle", "Angle snap")}${tool("percent", "Percent snap")}${tool("spin", "Spinner snap")}${bar}
        ${tool("sets", "Edit selection sets")}
        <span class="combo sets"><select aria-label="Selection sets"><option>Create Selection Set</option></select>${chevron}</span>${bar}
        ${tool("mirror", "Mirror")}${tool("align", "Align")}${bar}${tool("layers", "Layers")}${bar}
        ${tool("ribbon", "Ribbon", "on")}${tool("curve", "Curve editor")}${tool("schema", "Schematic view")}${bar}
        ${tool("material", "Material editor", "on")}${bar}
        ${tool("setup", "Render setup")}${tool("frame", "Rendered frame")}${tool("render", "Render")}
      </nav>
      <nav class="tabs" aria-label="Ribbon">
        <button class="active">Graphite Modeling Tools</button><button>Freeform</button><button>Selection</button><button class="wide">Object Paint</button>
        <button class="min" aria-label="Minimize ribbon"><svg width="28" height="10" aria-hidden="true"><rect x="1" y="1" width="15" height="8" rx="2" fill="#e6e9ec"></rect><path d="M5 3h7l-3 4z" fill="#333"></path><path d="M21 4h5l-2 3z" fill="#aaa"></path></svg></button>
      </nav>
      <div class="panelrow"><button>Polygon Modeling</button></div>
      <main class="work">
        <div class="left"><div class="cap"></div><div class="fill"></div><div class="dock"><div></div></div></div>
        <div class="mid">
          <scene-viewport></scene-viewport>
          <div class="slider"><button aria-label="Previous frame">&lt;</button><button class="thumb">0 / 100</button><button aria-label="Next frame">&gt;</button></div>
          <div class="timeline">
            <button class="open" aria-label="Open mini curve editor"><svg width="20" height="20" aria-hidden="true"><path d="M.5 1.5h19v5H.5zM.5 16.5h19v3H.5zM5 14V9M3 11l2-2l2 2M15 9v5M13 12l2 2l2-2M1 5q4-4 8-1t9 0" fill="none" stroke="#c4c4c4"></path></svg></button>
            <div class="track">
              ${frames.map((f) => html`<div class="frame ${f % 5 ? "" : "major"} ${f ? "" : "now"}">${f % 5 ? "" : html`<span>${f}</span>`}</div>`)}
            </div>
          </div>
        </div>
        <aside class="right">
          <svg class="sun" viewBox="0 0 12 12" aria-hidden="true"><path d="M6 0l2 3l3-1l-1 4l2 3l-4 0l-2 3l-2-3l-4-1l3-2l-1-4l3 1z" fill="#e8763a"></path><circle cx="6" cy="6" r="3" fill="#ffd24a"></circle></svg>
          <div class="chip"></div><div class="chip dark"></div>
          <div class="roll"><div class="group"></div><div class="group small"></div></div>
        </aside>
      </main>
      <footer class="status">
        <input class="script" aria-label="Script listener" />
        <div class="prompt">None Selected</div>
        <div class="marks">
          <button aria-label="Tip"><svg width="12" height="17"><path d="M6 0a5 5 0 0 1 5 5q0 3-3 7H4Q1 8 1 5a5 5 0 0 1 5-5z" fill="#a9a9a9"></path><path d="M6 12v5" stroke="#ddd" stroke-width="2"></path></svg></button>
          <button aria-label="Lock selection"><svg width="12" height="15"><path d="M3 7V4a3 3 0 0 1 6 0v3" fill="none" stroke="#aaa" stroke-width="2"></path><path d="M1 7h11v7H1z" fill="#b8b8b8"></path><path d="M6 9v4" stroke="#444" stroke-width="2"></path></svg></button>
          <button aria-label="Absolute mode"><svg width="16" height="16"><path d="M0 0h16v16H0z" fill="#e4eaf0"></path><circle cx="8" cy="8" r="4" fill="none" stroke="#333" stroke-width="2"></circle><path d="M8 0v4M8 12v4M0 8h4M12 8h4" stroke="#333" stroke-width="2"></path></svg></button>
        </div>
        <div class="coord"><label for="cx">X:</label><input id="cx" value="285.414mm" /></div>
        <div class="coord"><label for="cy">Y:</label><input id="cy" value="-1907.243mm" /></div>
        <div class="coord"><label for="cz">Z:</label><input id="cz" value="0.0mm" /></div>
        <div class="grid">Grid = 10.0mm</div>
        <div class="tag"><svg width="32" height="8" aria-hidden="true"><path d="M1 6q0-5 4-5t4 4" fill="none" stroke="#111" stroke-width="2"></path><path d="M6 4l22-3l2 7H8z" fill="#f0703c"></path></svg></div>
        <button class="auto">Auto Key</button>
        <span class="combo key"><select aria-label="Key filter"><option>Selected</option></select>${chevron}</span>
        <div class="play">
          <button aria-label="Go to start"><svg width="20" height="12"><path d="M1 0v12" stroke="#ddd" stroke-width="2"></path><path d="M10 0v12l-8-6zM18 0v12l-8-6z" fill="#ddd"></path></svg></button><span class="sep"></span>
          <button aria-label="Previous key"><svg width="20" height="12"><path d="M9 0v12L0 6z" fill="#ddd"></path><path d="M12 0v12M16 0v12" stroke="#ddd" stroke-width="3"></path></svg></button>
        </div>
      </footer>`;
  }
}
